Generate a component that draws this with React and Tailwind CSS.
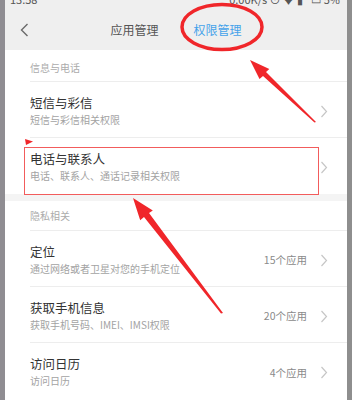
const font = { fontFamily: '"Noto Sans CJK SC", "Noto Sans", sans-serif' };

const sections = [
  {
    title: "信息与电话",
    rows: [
      { name: "短信与彩信", desc: "短信与彩信相关权限" },
      { name: "电话与联系人", desc: "电话、联系人、通话记录相关权限" },
    ],
  },
  {
    title: "隐私相关",
    rows: [
      { name: "定位", desc: "通过网络或者卫星对您的手机定位", count: "15个应用" },
      { name: "获取手机信息", desc: "获取手机号码、IMEI、IMSI权限", count: "20个应用" },
      { name: "访问日历", desc: "访问日历", count: "4个应用" },
    ],
  },
];

function Chevron() {
  return (
    <svg width="8" height="13" viewBox="0 0 8 13" fill="none">
      <path d="M1.5 1L6.5 6.5L1.5 12" stroke="#c6c6c6" strokeWidth="1.2" />
    </svg>
  );
}

function Row({ row, last }) {
  return (
    <div
      className={`ml-[25px] h-[56px] flex items-center justify-between pr-[19px] ${
        last ? "" : "border-b border-[#ededed]"
      }`}
    >
      <div className="flex flex-col pt-[1px]">
        <span className="text-[12.5px] leading-[18px] text-[#333]">{row.name}</span>
        <span className="text-[10px] leading-[15px] text-[#a3a3a3]">{row.desc}</span>
      </div>
      <div className="flex items-center gap-[13px] pt-[3px]">
        {row.count && <span className="text-[10.5px] text-[#8a8a8a]">{row.count}</span>}
        <Chevron />
      </div>
    </div>
  );
}

function Overlay() {
  return (
    <svg className="absolute left-0 top-0 pointer-events-none" width="352" height="400" viewBox="0 0 352 400">
      <ellipse cx="222" cy="27" rx="40" ry="22.5" fill="none" stroke="#f0262a" strokeWidth="3.5" />
      <rect x="24.5" y="147.5" width="294" height="47" fill="none" stroke="#f25c5c" strokeWidth="1" />
      <polygon points="25,139 33,141.5 26,145" fill="#f0262a" />
      {/* arrow 1 */}
      <polygon points="250,60 269.3,68.9 266,72 316,122 314.5,122.5 263,76 259.5,78.9" fill="#f0262a" />
      {/* arrow 2 */}
      <polygon points="133,198 152.8,210.5 149,213 223,313 221,313.5 144,217 140.2,220.3" fill="#f0262a" />
    </svg>
  );
}

export default function App() {
  return (
    <div className="relative w-[352px] h-[400px] overflow-hidden flex" style={font}>
      <div className="w-[5px] bg-[#8f8d92]" />
      <div className="flex-1 flex flex-col bg-white">
        {/* status + nav */}
        <div className="bg-[#efefef]">
          <div className="h-[10px] overflow-hidden flex justify-between px-[5px] text-[11px] text-[#555]">
            <span className="-mt-[9px]">13:58</span>
            <span className="-mt-[9px] pr-[2px]">0.00K/s ⊙ ♦ ▮ ⁷ ▭ 5%</span>
          </div>
          <div className="h-[40px] grid grid-cols-[40px_1fr_40px] items-center">
            <div className="pl-[15px]">
              <svg width="9" height="14" viewBox="0 0 9 14" fill="none">
                <path d="M7.5 1L1.5 7L7.5 13" stroke="#6a6a6a" strokeWidth="1.4" />
              </svg>
            </div>
            <div className="flex justify-center gap-[35px] text-[12px]">
              <span className="text-[#555]">应用管理</span>
              <span className="text-[#45a2ea]">权限管理</span>
            </div>
            <div />
          </div>
        </div>

        {/* content */}
        {sections.map((s, i) => (
          <div key={s.title}>
            {i > 0 && <div className="h-[7px] bg-[#f4f4f4]" />}
            <div
              className={`ml-[25px] border-b border-[#ededed] text-[10px] leading-[14px] text-[#ababab] ${
                i === 0 ? "h-[32px] pt-[11px]" : "h-[30px] pt-[8px]"
              }`}
            >
              {s.title}
            </div>
            {s.rows.map((r, j) => (
              <Row key={r.name} row={r} last={j === s.rows.length - 1} />
            ))}
          </div>
        ))}
      </div>
      <div className="w-[5px] bg-[#8e8e8e]" />
      <Overlay />
    </div>
  );
}
